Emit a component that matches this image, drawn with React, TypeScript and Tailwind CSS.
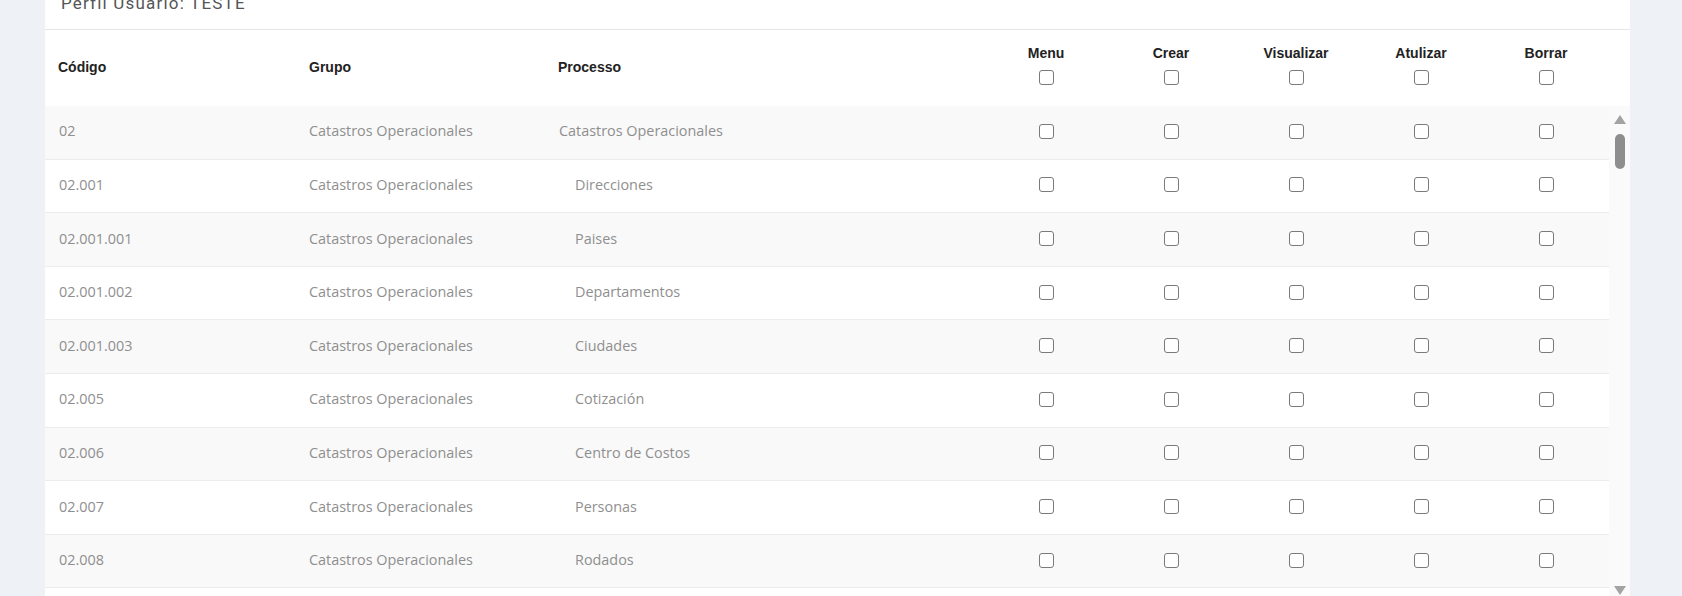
import React from "react";

type Row = { code: string; group: string; process: string; level: number };

const rows: Row[] = [
  { code: "02", group: "Catastros Operacionales", process: "Catastros Operacionales", level: 0 },
  { code: "02.001", group: "Catastros Operacionales", process: "Direcciones", level: 1 },
  { code: "02.001.001", group: "Catastros Operacionales", process: "Paises", level: 1 },
  { code: "02.001.002", group: "Catastros Operacionales", process: "Departamentos", level: 1 },
  { code: "02.001.003", group: "Catastros Operacionales", process: "Ciudades", level: 1 },
  { code: "02.005", group: "Catastros Operacionales", process: "Cotización", level: 1 },
  { code: "02.006", group: "Catastros Operacionales", process: "Centro de Costos", level: 1 },
  { code: "02.007", group: "Catastros Operacionales", process: "Personas", level: 1 },
  { code: "02.008", group: "Catastros Operacionales", process: "Rodados", level: 1 },
];

const permissions = ["Menu", "Crear", "Visualizar", "Atulizar", "Borrar"];

const cols = "grid grid-cols-[251px_249px_438.5px_125px_125px_125px_125px_125px]";

function Check() {
  return (
    <input
      type="checkbox"
      className="m-0 h-[15px] w-[15px] cursor-pointer appearance-none rounded-[3px] border border-[#7a7a7a] bg-white checked:bg-[#2563eb]"
    />
  );
}

export default function App() {
  return (
    <div className="h-[596px] w-full overflow-hidden bg-[#eef1f5] font-['Open_Sans',sans-serif]">
      <div className="ml-[45px] flex h-full w-[1585px] flex-col bg-white">
        {/* title bar */}
        <div className="flex h-[30px] shrink-0 items-end overflow-hidden border-b border-[#e6e6e6] pb-[16px] pl-[16px]">
          <span className="font-['Roboto',sans-serif] text-[17px] leading-[20px] tracking-[1.2px] text-[#555]">
            Perfil Usuario: TESTE
          </span>
        </div>

        {/* table header */}
        <div className={`${cols} h-[76px] shrink-0 font-['Liberation_Sans',Arial,sans-serif] text-[14px] font-bold text-[#222]`}>
          <div className="flex items-center pb-[2px] pl-[13px]">Código</div>
          <div className="flex items-center pb-[2px] pl-[13px]">Grupo</div>
          <div className="flex items-center pb-[2px] pl-[13px]">Processo</div>
          {permissions.map((p) => (
            <div key={p} className="flex flex-col items-center pt-[14px]">
              <span className="leading-[18px]">{p}</span>
              <span className="mt-[8px] flex">
                <Check />
              </span>
            </div>
          ))}
        </div>

        {/* body + scrollbar */}
        <div className="flex min-h-0 flex-1">
          <div className="flex-1 overflow-hidden">
            {rows.map((r, i) => (
              <div
                key={r.code}
                className={`${cols} h-[53.6px] border-b border-[#ececec] text-[14.4px] text-[#8f8f8f] ${
                  i % 2 === 0 ? "bg-[#f9f9f9]" : "bg-white"
                }`}
              >
                <div className="flex items-center pb-[2px] pl-[14px]">{r.code}</div>
                <div className="flex items-center pb-[2px] pl-[13px]">{r.group}</div>
                <div className={`flex items-center pb-[2px] ${r.level === 0 ? "pl-[14px]" : "pl-[30px]"}`}>
                  {r.process}
                </div>
                {permissions.map((p) => (
                  <div key={p} className="flex items-center justify-center pb-[2px]">
                    <Check />
                  </div>
                ))}
              </div>
            ))}
            {/* next row, scrolled below the fold */}
            <div className="h-[53.6px] bg-white" />
          </div>
          <div className="flex w-[21px] shrink-0 flex-col items-center bg-[#fafafa] pt-[9px]">
            <svg width="12" height="9" viewBox="0 0 12 9">
              <polygon points="6,0 12,9 0,9" fill="#a3a3a3" />
            </svg>
            <div className="mt-[10px] h-[35px] w-[10px] rounded-full bg-[#8e8e8e]" />
            <div className="flex-1" />
            <svg width="12" height="9" viewBox="0 0 12 9" className="mb-[1px]">
              <polygon points="0,0 12,0 6,9" fill="#a3a3a3" />
            </svg>
          </div>
        </div>
      </div>
    </div>
  );
}
